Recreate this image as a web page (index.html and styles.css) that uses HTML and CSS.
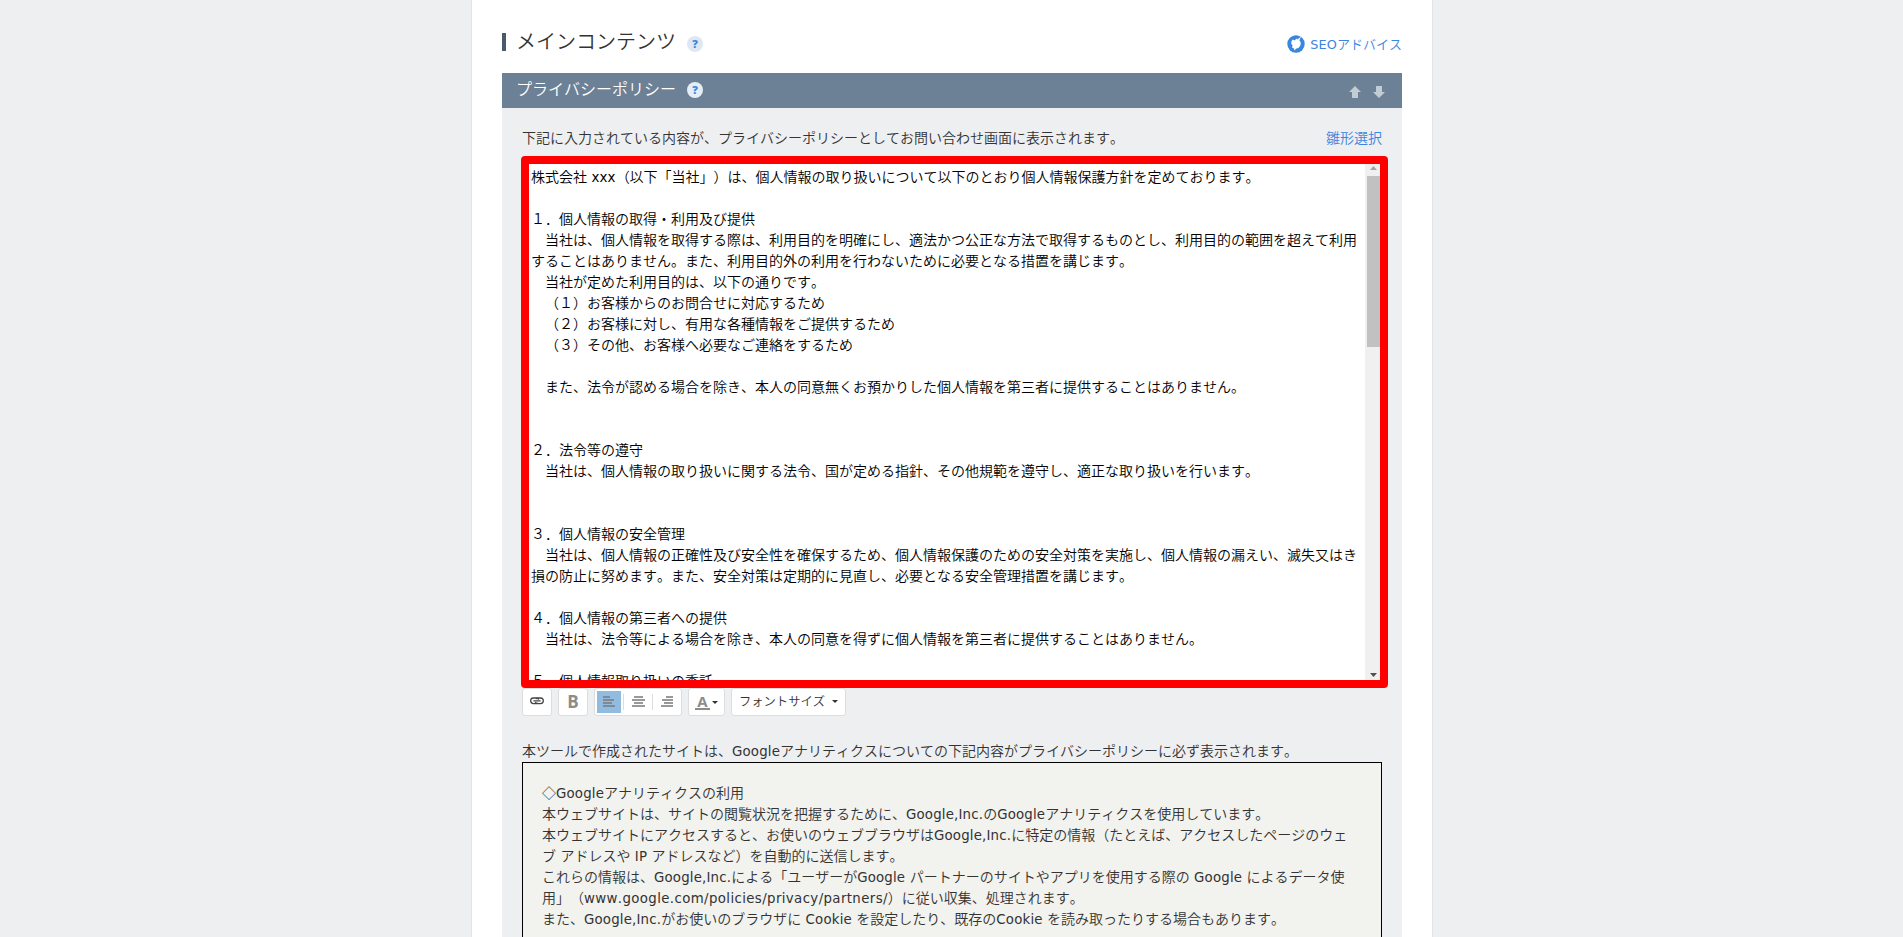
FILE: index.html
```html
<!DOCTYPE html>
<html lang="ja">
<head>
<meta charset="utf-8">
<title>プライバシーポリシー</title>
<link rel="stylesheet" href="styles.css">
</head>
<body>
<main class="page">
  <header class="page-head">
    <h1 class="title">メインコンテンツ</h1>
    <span class="help">?</span>
    <a class="seo">
      <svg width="18" height="18" viewBox="0 0 18 18"><circle cx="9" cy="9" r="8.7" fill="#3986df"/><path d="M4.6 6 5.8 4.4 7.6 5.6 9.6 3.4 10.4 4.6 14 1.4 12.4 5.2 13.8 7.4 13.4 10.6 11.4 13 9.4 13.4 7.4 15.6 7 13.4 5 12.4 5.6 10.6 4.2 8.6Z" fill="#fff"/></svg>
      <span class="seo-text"><span class="l">SEO</span>アドバイス</span>
    </a>
  </header>
  <section class="panel">
    <div class="panel-head">
      <h2 class="panel-title">プライバシーポリシー</h2>
      <span class="help help-w">?</span>
      <div class="arrows">
        <svg width="12" height="12" viewBox="0 0 12 12"><path d="M6 0 12 6H9V12H3V6H0Z" fill="#c3cbd4"/></svg>
        <svg width="12" height="12" viewBox="0 0 12 12"><path d="M6 12 0 6H3V0H9V6H12Z" fill="#c3cbd4"/></svg>
      </div>
    </div>
    <div class="panel-body">
      <div class="lead"><span>下記に入力されている内容が、プライバシーポリシーとしてお問い合わせ画面に表示されます。</span><a class="link">雛形選択</a></div>
      <div class="editor">
        <div class="editor-text">株式会社<span class="l"> xxx</span>（以下「当社」）は、個人情報の取り扱いについて以下のとおり個人情報保護方針を定めております。

１．個人情報の取得・利用及び提供
　当社は、個人情報を取得する際は、利用目的を明確にし、適法かつ公正な方法で取得するものとし、利用目的の範囲を超えて利用
することはありません。また、利用目的外の利用を行わないために必要となる措置を講じます。
　当社が定めた利用目的は、以下の通りです。
　（１）お客様からのお問合せに対応するため
　（２）お客様に対し、有用な各種情報をご提供するため
　（３）その他、お客様へ必要なご連絡をするため

　また、法令が認める場合を除き、本人の同意無くお預かりした個人情報を第三者に提供することはありません。


２．法令等の遵守
　当社は、個人情報の取り扱いに関する法令、国が定める指針、その他規範を遵守し、適正な取り扱いを行います。


３．個人情報の安全管理
　当社は、個人情報の正確性及び安全性を確保するため、個人情報保護のための安全対策を実施し、個人情報の漏えい、滅失又はき
損の防止に努めます。また、安全対策は定期的に見直し、必要となる安全管理措置を講じます。

４．個人情報の第三者への提供
　当社は、法令等による場合を除き、本人の同意を得ずに個人情報を第三者に提供することはありません。

５．個人情報取り扱いの委託</div>
        <div class="scroll">
          <svg width="7" height="4" viewBox="0 0 7 4"><path d="M0 4 3.5 0 7 4Z" fill="#a3a3a3"/></svg>
          <div class="thumb"></div>
          <svg class="down" width="7" height="4" viewBox="0 0 7 4"><path d="M0 0H7L3.5 4Z" fill="#505050"/></svg>
        </div>
      </div>
      <div class="tools">
        <div class="btn w29"><svg width="14" height="8" viewBox="0 0 14 8" fill="none" stroke="#444" stroke-width="1.3"><path d="M8.6 2.6Q8.2 1 6.6 1H3.4Q.7 1 .7 3.8T3.4 6.6H6.6Q7.6 6.6 8.2 5.8M5.4 5Q5.8 6.6 7.4 6.6H10.6Q13.3 6.6 13.3 3.8T10.6 1H7.4Q6.4 1 5.8 1.8M3.4 3.8H10.6"/></svg></div>
        <div class="btn w29 bold">B</div>
        <div class="btn group">
          <span class="al on"><svg width="12" height="12" viewBox="0 0 12 12"><path d="M0 1H7M0 4H11M0 7H9M0 10H12" stroke="#808a95" stroke-width="2"/></svg></span>
          <span class="al"><svg width="13" height="12" viewBox="0 0 13 12"><path d="M2 1H11M0 4H13M2 7H11M0 10H13" stroke="#999" stroke-width="2"/></svg></span>
          <span class="al"><svg width="12" height="12" viewBox="0 0 12 12"><path d="M5 1H12M1 4H12M3 7H12M0 10H12" stroke="#999" stroke-width="2"/></svg></span>
        </div>
        <div class="btn w36"><span class="color">A</span><i class="caret"></i></div>
        <div class="btn size">フォントサイズ<i class="caret"></i></div>
      </div>
      <p class="note">本ツールで作成されたサイトは、<span class="l">Google</span>アナリティクスについての下記内容がプライバシーポリシーに必ず表示されます。</p>
      <div class="ga">◇<span class="l">Google</span>アナリティクスの利用
本ウェブサイトは、サイトの閲覧状況を把握するために、<span class="l">Google,Inc.</span>の<span class="l">Google</span>アナリティクスを使用しています。
本ウェブサイトにアクセスすると、お使いのウェブブラウザは<span class="l">Google,Inc.</span>に特定の情報（たとえば、アクセスしたページのウェ
ブ<span class="l"> </span>アドレスや<span class="l"> IP </span>アドレスなど）を自動的に送信します。
これらの情報は、<span class="l">Google,Inc.</span>による「ユーザーが<span class="l">Google </span>パートナーのサイトやアプリを使用する際の<span class="l"> Google </span>によるデータ使
用」（<span class="l url">www.google.com/policies/privacy/partners/</span>）に従い収集、処理されます。
また、<span class="l">Google,Inc.</span>がお使いのブラウザに<span class="l"> Cookie </span>を設定したり、既存の<span class="l">Cookie </span>を読み取ったりする場合もあります。</div>
    </div>
  </section>
</main>
</body>
</html>
```
FILE: styles.css
```css
* { box-sizing: border-box; }
html { overflow: hidden; }
body {
  margin: 0;
  height: 937px;
  overflow: hidden;
  background: #eeeff1;
  color: #333;
  font: 350 14px/21px "Noto Sans CJK JP", sans-serif;
  text-spacing-trim: space-all;
  font-kerning: none;
}
.page {
  display: flex;
  flex-direction: column;
  width: 962px;
  height: 937px;
  overflow: hidden;
  margin-left: 471px;
  padding: 27px 30px 0;
  background: #fff;
  border: 1px solid #e3e4e6;
  border-width: 0 1px;
}
.page-head { display: flex; flex: none; height: 46px; align-items: flex-start; }
.title {
  margin: 6px 0 0;
  width: 185px;
  height: 18px;
  border-left: 4px solid #4b5a6b;
  padding-left: 10px;
  font-size: 20px;
  font-weight: 350;
  line-height: 16px;
  white-space: nowrap;
}
.help {
  width: 16px;
  height: 16px;
  margin-top: 9px;
  border-radius: 50%;
  background: #dfe8f2;
  color: #3986df;
  font: 800 11px/16px "Open Sans", sans-serif;
  text-align: center;
}
.help-w { background: #e6edf6; }
.seo {
  display: flex;
  gap: 5px;
  margin: 8px 0 0 auto;
  color: #3986df;
  font-size: 13px;
  line-height: 17px;
}
.seo .l { font-size: 12.8px; }
.panel { flex: 1; min-height: 0; display: flex; flex-direction: column; }
.panel-head {
  display: flex;
  flex: none;
  height: 35px;
  padding-left: 14px;
  background: #6d8196;
}
.panel-title {
  margin: 0;
  width: 171px;
  color: #fff;
  font-size: 16px;
  font-weight: 350;
  line-height: 30px;
}
.arrows { display: flex; gap: 12px; margin: 13px 17px 0 auto; }
.arrows svg { display: block; }
.panel-body { flex: 1; min-height: 0; overflow: hidden; display: flex; flex-direction: column; padding: 20px 20px 0; background: #eeeff1; }
.lead { flex: none; display: flex; justify-content: space-between; height: 28px; line-height: 18px; }
.link { color: #3986df; }
.l { font-family: "DejaVu Sans", sans-serif; font-size: 13.33px; font-weight: 400; line-height: 1; letter-spacing: .18px; }
.url { letter-spacing: .38px; }
.editor {
  display: flex;
  flex: none;
  width: 867px;
  height: 532px;
  margin-left: -1px;
  border: 8px solid #f00;
  border-radius: 4px;
  background: #fff;
  overflow: hidden;
}
.editor-text { flex: 1; padding: 2px 0 0 2px; white-space: pre; color: #000; }
.scroll {
  display: flex;
  flex-direction: column;
  align-items: center;
  width: 15px;
  padding: 2px 0 3px 2px;
  background: #f0f0f0;
}
.thumb { width: 13px; height: 171px; margin-top: 6px; background: #c1c1c1; }
.down { margin-top: auto; }
.tools { flex: none; display: flex; gap: 6px; height: 28px; }
.btn {
  display: flex;
  align-items: center;
  justify-content: center;
  height: 28px;
  padding-bottom: 2px;
  background: #fff;
  border: 1px solid #ddd;
  border-radius: 3px;
}
.w29 { width: 30px; }
.bold { color: #8c8c8c; font: bold 17px/20px "Open Sans", sans-serif; padding-bottom: 0; }
.group { width: 88px; justify-content: flex-start; padding: 0 0 0 2px; }
.al { display: flex; width: 29px; height: 16px; align-items: center; justify-content: center; border-left: 1px solid #ddd; }
.al.on { width: 24px; height: 22px; background: #92bbe0; margin-right: 2px; border: 0; }
.w36 { width: 37px; gap: 2px; padding: 0; }
.color { width: 15px; border-bottom: 2px solid #8c8c8c; color: #8c8c8c; font: bold 15px/13px "Open Sans", sans-serif; text-align: center; }
.caret { border: 3px solid transparent; border-top-color: #333; border-bottom: 0; }
.size { width: 115px; gap: 7px; font-size: 12.3px; }
.note { flex: none; margin: 25px 0 0; height: 21px; line-height: 18px; white-space: nowrap; }
.ga {
  flex: 1;
  min-height: 0;
  padding: 19px;
  background: #f2f2ee;
  border: 1px solid #000;
  border-bottom: 0;
  white-space: pre;
}
```
